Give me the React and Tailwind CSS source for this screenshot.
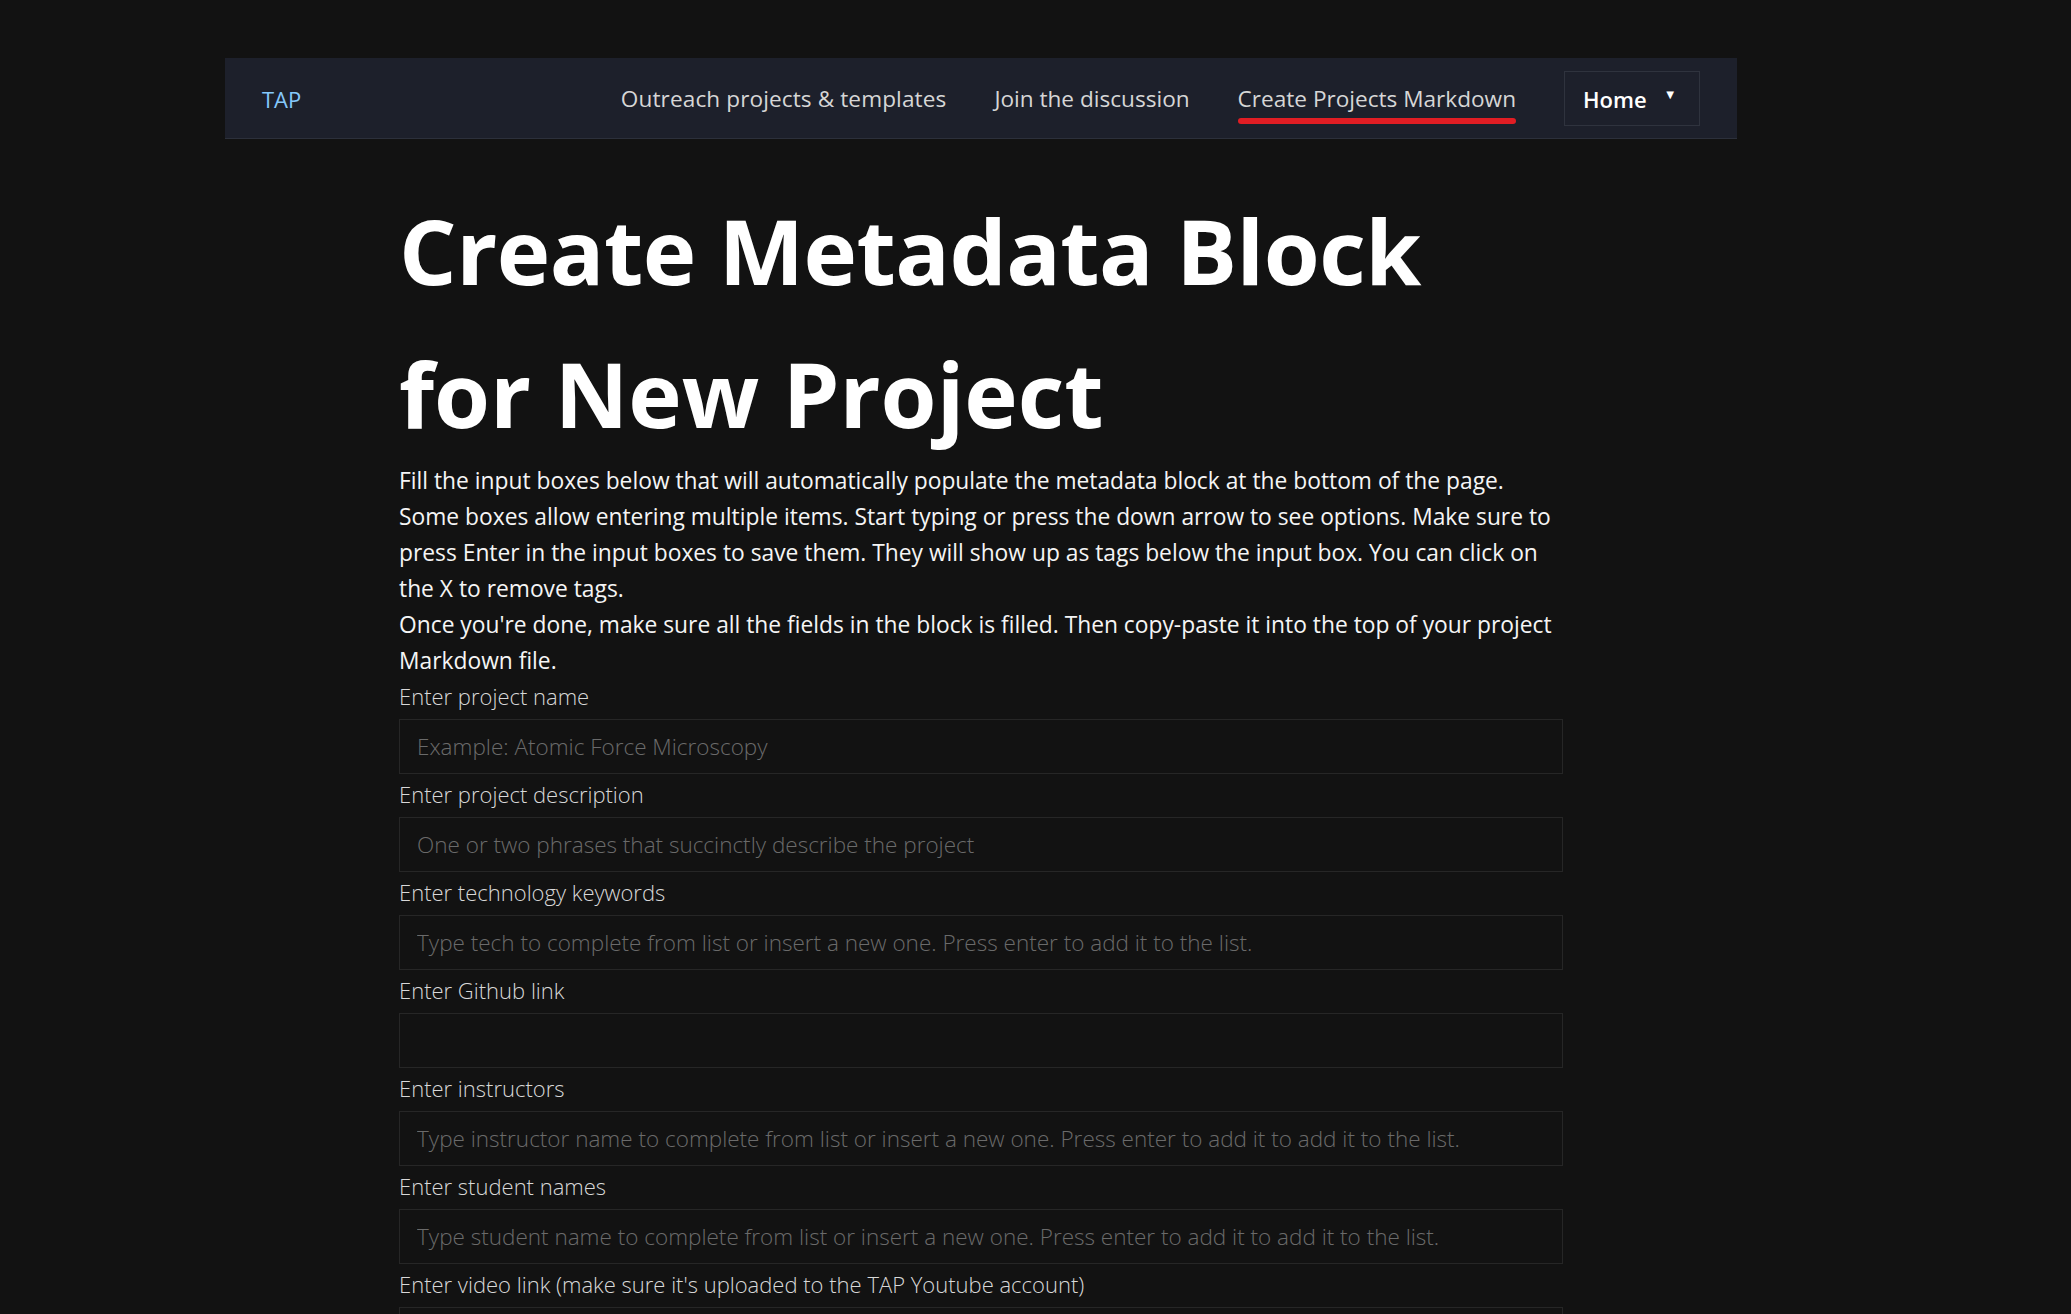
import React from "react";

const fields = [
  { label: "Enter project name", ph: "Example: Atomic Force Microscopy" },
  { label: "Enter project description", ph: "One or two phrases that succinctly describe the project" },
  { label: "Enter technology keywords", ph: "Type tech to complete from list or insert a new one. Press enter to add it to the list." },
  { label: "Enter Github link", ph: "" },
  { label: "Enter instructors", ph: "Type instructor name to complete from list or insert a new one. Press enter to add it to add it to the list." },
  { label: "Enter student names", ph: "Type student name to complete from list or insert a new one. Press enter to add it to add it to the list." },
  { label: "Enter video link (make sure it's uploaded to the TAP Youtube account)", ph: "" },
];

const lines = [
  "Fill the input boxes below that will automatically populate the metadata block at the bottom of the page.",
  "Some boxes allow entering multiple items. Start typing or press the down arrow to see options. Make sure to",
  "press Enter in the input boxes to save them. They will show up as tags below the input box. You can click on",
  "the X to remove tags.",
  "Once you're done, make sure all the fields in the block is filled. Then copy-paste it into the top of your project",
  "Markdown file.",
];

export default function App() {
  return (
    <div className="min-h-screen bg-[#121212] pt-[58px] pb-10 font-['Open_Sans',sans-serif] text-[#f2f2f2]">
      <nav className="ml-[225px] w-[1512px] h-[81px] bg-[#1d202b] border-b border-[#2c303b] flex items-center pl-[37px] pr-[37px]">
        <span className="text-[22px] text-[#85c8fb] pt-[2px]">TAP</span>
        <div className="ml-auto flex items-center gap-[48px] text-[22.6px] text-[#d6d6d6]">
          <span className="pt-[2px] tracking-[0.1px]">Outreach projects &amp; templates</span>
          <span className="pt-[2px]">Join the discussion</span>
          <span className="relative pt-[2px]">
            Create Projects Markdown
            <span className="absolute left-0 right-0 -bottom-[8px] h-[6px] rounded-full bg-[#e11d24]"></span>
          </span>
          <div className="w-[136px] h-[55px] border border-[#2f333e] flex items-center pl-[18px]">
            <span className="text-[22px] font-semibold text-white pt-[2px]">Home</span>
            <span className="ml-[17px] text-[13px] text-white -mt-[6px]">▼</span>
          </div>
        </div>
      </nav>

      <main className="ml-[399px] w-[1164px]">
        <h1 className="mt-[40px] text-[90.5px] leading-[143px] font-bold text-white tracking-[-0.5px]">
          Create Metadata Block
          <br />
          <span className="tracking-[0px]">for New Project</span>
        </h1>
        <div className="text-[22.8px] leading-[36px] text-[#f5f5f5] -mt-[2px]">
          {lines.map((l, i) => (
            <div key={i} className="whitespace-nowrap">{l}</div>
          ))}
        </div>
        <form className="flex flex-col -mt-[1px]">
          {fields.map((f, i) => (
            <div key={i} className="flex flex-col mb-[2px]">
              <label className="text-[22px] leading-[36px] font-light text-[#d8d8d8] pb-[5px] whitespace-nowrap">{f.label}</label>
              <input
                type="text"
                placeholder={f.ph}
                className="h-[55px] w-full bg-[#121212] border border-[#262626] px-[17px] text-[22.5px] font-light text-[#d8d8d8] placeholder:text-[#6a6a6a] outline-none"
              />
            </div>
          ))}
        </form>
      </main>
    </div>
  );
}
